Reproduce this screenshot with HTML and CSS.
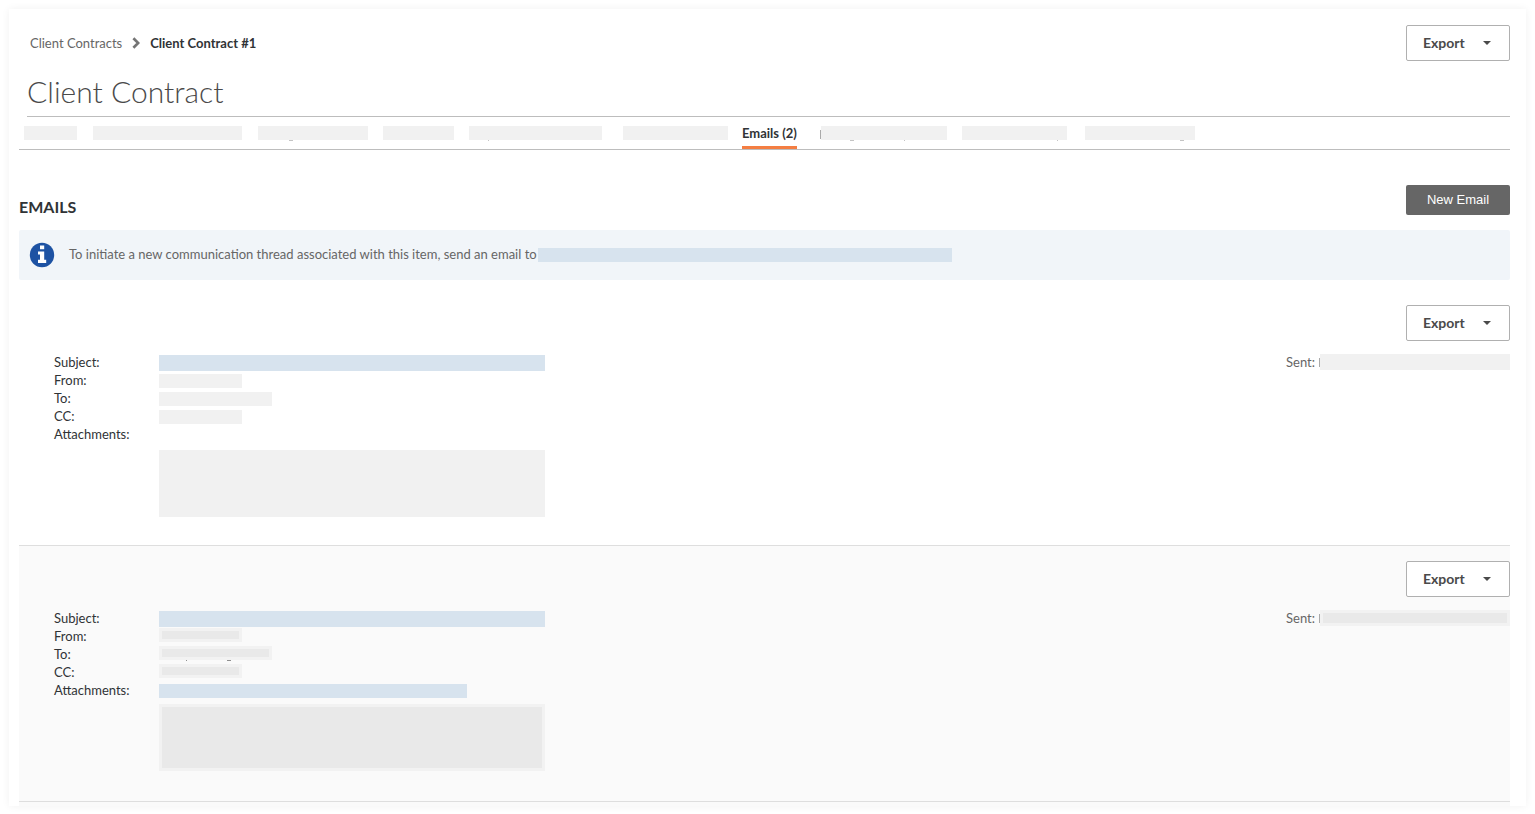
FILE: index.html
```html
<!DOCTYPE html>
<html lang="en">
<head>
<meta charset="utf-8">
<meta name="viewport" content="width=device-width, initial-scale=1">
<title>Client Contract #1</title>
<link rel="stylesheet" href="styles.css">
</head>
<body>
<main class="panel">
  <header class="topbar">
    <nav class="crumbs" aria-label="Breadcrumb">
      <a class="crumb-link" href="#">Client Contracts</a>
      <svg class="crumb-sep" width="8" height="12" viewBox="0 0 8 12" aria-hidden="true"><path d="M1.4 1.2 6.2 6 1.4 10.8" fill="none" stroke="#757575" stroke-width="2.7"/></svg>
      <span class="crumb-current">Client Contract #1</span>
    </nav>
    <button class="export" type="button">Export<svg width="8" height="4" viewBox="0 0 8 4" aria-hidden="true"><path d="M0 0h8L4 4z" fill="#4a4a4a"/></svg></button>
  </header>

  <h1 class="title">Client Contract</h1>

  <nav class="tabs" aria-label="Contract sections">
    <a class="tab" href="#" style="width:54px" aria-label="Tab 1"><span class="bar" style="width:53px"></span></a>
    <a class="tab" href="#" style="width:150px" aria-label="Tab 2"><span class="bar" style="width:149px"></span></a>
    <a class="tab" href="#" style="width:110px" aria-label="Tab 3"><span class="bar" style="width:110px"><i class="tail" style="left:31px"></i></span></a>
    <a class="tab" href="#" style="width:71px" aria-label="Tab 4"><span class="bar" style="width:71px"></span></a>
    <a class="tab" href="#" style="width:139px" aria-label="Tab 5"><span class="bar" style="width:133px"><i class="tail dot" style="left:19px"></i></span></a>
    <a class="tab" href="#" style="width:104px" aria-label="Tab 6"><span class="bar" style="width:105px"></span></a>
    <a class="tab active" href="#" aria-current="page">Emails (2)</a>
    <a class="tab end" href="#" style="width:135px" aria-label="Tab 8"><span class="bar edge" style="width:126px"><i class="tail" style="left:29px"></i><i class="tail dot" style="left:83px"></i></span></a>
    <a class="tab" href="#" style="width:105px" aria-label="Tab 9"><span class="bar" style="width:105px"><i class="tail dot" style="left:95px"></i></span></a>
    <a class="tab end" href="#" style="width:113px" aria-label="Tab 10"><span class="bar" style="width:110px"><i class="tail" style="left:95px"></i></span></a>
  </nav>

  <section class="emails">
    <div class="section-head">
      <h2 class="section-title">EMAILS</h2>
      <button class="primary" type="button">New Email</button>
    </div>

    <p class="notice">
      <svg class="notice-icon" width="26" height="26" viewBox="0 0 26 26" aria-hidden="true"><circle cx="13" cy="13" r="12.2" fill="#1d52a3"/><path d="M11 3.600h4.200v3.600H11zM9 9.400h6.200v8.400h2v3.200H9v-3.200h2v-5.200H9z" fill="#fff"/></svg>
      <span class="notice-text">To initiate a new communication thread associated with this item, send an email to</span>
      <span class="bar blue" style="width:414px"></span>
    </p>

    <article class="message">
      <button class="export" type="button">Export<svg width="8" height="4" viewBox="0 0 8 4" aria-hidden="true"><path d="M0 0h8L4 4z" fill="#4a4a4a"/></svg></button>
      <div class="details">
        <dl class="fields low">
          <dt>Subject:</dt><dd><span class="bar blue tall" style="width:386px"></span></dd>
          <dt>From:</dt><dd><span class="bar" style="width:83px"></span></dd>
          <dt>To:</dt><dd><span class="bar" style="width:113px"></span></dd>
          <dt>CC:</dt><dd><span class="bar" style="width:83px"></span></dd>
          <dt>Attachments:</dt><dd></dd>
        </dl>
        <p class="sent">Sent: <span class="bar tall edge" style="width:190px"></span></p>
      </div>
      <div class="content"></div>
    </article>

    <article class="message shaded">
      <button class="export" type="button">Export<svg width="8" height="4" viewBox="0 0 8 4" aria-hidden="true"><path d="M0 0h8L4 4z" fill="#4a4a4a"/></svg></button>
      <div class="details">
        <dl class="fields">
          <dt>Subject:</dt><dd class="down"><span class="bar blue tall" style="width:386px"></span></dd>
          <dt>From:</dt><dd><span class="bar framed" style="width:83px"></span></dd>
          <dt>To:</dt><dd><span class="bar framed" style="width:113px"><i class="tail dot" style="left:24px"></i><i class="tail" style="left:65px"></i></span></dd>
          <dt>CC:</dt><dd><span class="bar framed" style="width:83px"></span></dd>
          <dt>Attachments:</dt><dd class="down"><span class="bar blue" style="width:308px"></span></dd>
        </dl>
        <p class="sent">Sent: <span class="bar tall framed edge" style="width:190px"></span></p>
      </div>
      <div class="content framed"></div>
    </article>
    <div class="list-end"></div>
  </section>
</main>
</body>
</html>
```
FILE: styles.css
```css
* { box-sizing: border-box; }

body {
  margin: 0;
  padding: 9px;
  background: #fff;
  color: #303336;
  font: 13px/18px Lato, "Liberation Sans", sans-serif;
}

h1, h2, p, dl, dd { margin: 0; }
a { color: inherit; text-decoration: none; }

.panel {
  padding: 16px 16px 0 10px;
  background: #fff;
  box-shadow: 0 0 8px rgba(0, 0, 0, 0.06);
}

.topbar {
  display: flex;
  justify-content: space-between;
  align-items: center;
  padding-left: 11px;
}

.crumbs { display: flex; align-items: center; }
.crumb-link { color: #666; }
.crumb-sep { margin: 0 10px; }
.crumb-current { font-weight: 700; }

.export {
  display: inline-flex;
  align-items: center;
  gap: 18px;
  height: 36px;
  padding: 0 17px 0 16px;
  min-width: 104px;
  border: 1px solid #b0b0b0;
  border-radius: 2px;
  background: #fff;
  color: #4a4a4a;
  font: 700 14px/18px Lato, "Liberation Sans", sans-serif;
}

.title {
  margin-left: 8px;
  padding: 10px 0 5px;
  border-bottom: 1px solid #bdbdbd;
  color: #4a4a4a;
  font-size: 30px;
  font-weight: 300;
  line-height: 40px;
}

.tabs {
  display: flex;
  gap: 15px;
  height: 33px;
  padding-left: 5px;
  border-bottom: 1px solid #bdbdbd;
}

.tab {
  display: flex;
  flex: none;
  align-items: flex-start;
  padding-top: 9px;
}
.tab.end { justify-content: flex-end; }
.tab.active {
  padding-top: 7px;
  border-bottom: 3px solid #f47e42;
  font-weight: 700;
}

.bar {
  display: inline-block;
  position: relative;
  flex: none;
  height: 14px;
  background: #f1f1f1;
}
.bar.tall { height: 16px; }
.bar.blue { background: #d7e3ee; }
.bar.framed, .content.framed {
  border: 3px solid #f2f2f2;
  background: #e9e9e9;
}
.bar.edge::before {
  content: "";
  position: absolute;
  top: 4px;
  left: -1px;
  width: 1px;
  height: 9px;
  background: #aaa;
}
.bar.framed.edge::before { top: 1px; left: -4px; }

/* descenders showing under a masked value */
.tail {
  position: absolute;
  top: 100%;
  width: 4px;
  height: 1px;
  background: #c4c4c4;
}
.tail.dot { width: 1px; }
.framed .tail { margin-top: 3px; background: #8f8f8f; }

.section-head {
  display: flex;
  justify-content: space-between;
  align-items: flex-end;
  padding: 35px 0 15px;
}
.section-title { font-size: 16px; line-height: 16px; }

.primary {
  width: 104px;
  height: 30px;
  padding: 0;
  border: 0;
  border-radius: 2px;
  background: #666;
  color: #fff;
  font: 13px/18px "Liberation Sans", Arial, sans-serif;
}

.notice {
  display: flex;
  align-items: center;
  height: 50px;
  margin-bottom: 10px;
  padding-left: 10px;
  border-radius: 2px;
  background: #f1f5f9;
  color: #666;
}
.notice-icon { margin-right: 14px; }
.notice-text { padding-bottom: 2px; }
.notice .bar { margin-left: 1px; }

.message {
  display: flex;
  flex-direction: column;
  align-items: flex-start;
  min-height: 256px;
  padding-top: 15px;
  border-bottom: 1px solid #dedede;
}
.message .export { align-self: flex-end; }
.message.shaded, .list-end { background: #fafafa; }
.list-end { height: 4px; }

.details {
  display: flex;
  justify-content: space-between;
  width: 100%;
  padding: 12px 0 0 35px;
}

.fields {
  display: grid;
  grid-template-columns: 105px auto;
  grid-auto-rows: 18px;
}
.fields dd { display: flex; align-items: center; padding-bottom: 2px; }
.fields.low dd, .fields dd.down { padding: 2px 0 0; }

.sent { display: flex; align-items: center; height: 18px; gap: 5px; color: #666; }

.content {
  width: 386px;
  height: 67px;
  margin: 7px 0 0 140px;
  background: #f1f1f1;
}
.content.framed { margin-top: 5px; }
```
